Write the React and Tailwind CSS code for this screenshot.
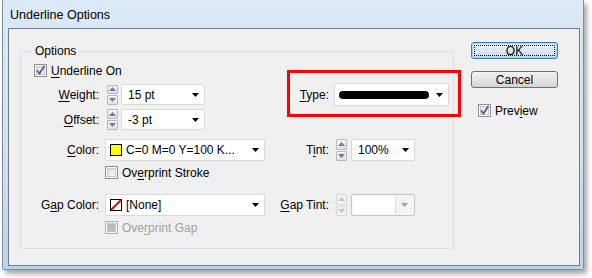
import React from "react";

const FONT = { fontFamily: '"Liberation Sans", Arial, sans-serif' };

function Acc({ text, at, className = "" }) {
  return (
    <span className={className}>
      {text.slice(0, at)}
      <span className="underline underline-offset-2">{text[at]}</span>
      {text.slice(at + 1)}
    </span>
  );
}

function Check({ checked, disabled }) {
  return (
    <div
      className={`w-[13px] h-[13px] border flex items-center justify-center ${
        disabled ? "border-[#b1b1b1] bg-[#f4f4f4]" : "border-[#8e8f8f] bg-white"
      }`}
    >
      <div
        className={`w-[9px] h-[9px] border flex items-center justify-center ${
          disabled
            ? "border-[#c9c9c9] bg-[#b8b8b8]"
            : "border-[#c8c8c8] bg-gradient-to-br from-[#dcdcdc] to-[#fbfbfb]"
        }`}
      >
        {checked && (
          <svg width="9" height="9" viewBox="0 0 9 9" className="overflow-visible">
            <path d="M1 4.5 L3.5 7.5 L8.5 0" stroke="#4a5f97" strokeWidth="1.8" fill="none" />
          </svg>
        )}
      </div>
    </div>
  );
}

function Spinner({ h, disabled }) {
  const col = disabled ? "#c4c4c4" : "#6b7db0";
  const cell = `flex-1 flex items-center justify-center border rounded-[1px] ${
    disabled ? "border-[#d6d6d6] bg-[#f2f2f2]" : "border-[#b8b8b8] bg-gradient-to-b from-[#f6f6f6] to-[#e2e2e2]"
  }`;
  return (
    <div className={`flex flex-col w-[11px] gap-[1px] ${h}`}>
      <div className={cell}>
        <svg width="7" height="4" viewBox="0 0 7 4">
          <path d="M3.5 0 L7 4 L0 4Z" fill={col} />
        </svg>
      </div>
      <div className={cell}>
        <svg width="7" height="4" viewBox="0 0 7 4">
          <path d="M0 0 L7 0 L3.5 4Z" fill={col} />
        </svg>
      </div>
    </div>
  );
}

function Arrow({ gray }) {
  return (
    <svg width="7" height="4" viewBox="0 0 7 4">
      <path d="M0 0 L7 0 L3.5 4Z" fill={gray ? "#a0a0a0" : "#000"} />
    </svg>
  );
}

function Drop({ w, h, children }) {
  return (
    <div
      className={`${w} ${h} bg-white border border-[#dadada] rounded-[2px] flex items-center pl-[6px] pr-[5px]`}
    >
      <div className="flex-1 flex items-center gap-[4px] min-w-0">{children}</div>
      <Arrow />
    </div>
  );
}

function OptionsGroup() {
  return (
    <div className="relative w-[434px] h-[198px] border border-[#d5dfe5] rounded-[3px] flex flex-col">
      <span className="absolute left-[12px] -top-[9px] px-[2px] bg-[#f0f0f0] leading-[16px]">Options</span>

      {/* underline on */}
      <div className="mt-[12px] pl-[13px] h-[13px] flex items-center gap-[4px]">
        <Check checked />
        <Acc text="Underline On" at={0} />
      </div>

      {/* weight + type */}
      <div className="mt-[6px] h-[23px] flex items-center">
        <div className="w-[257px] flex items-center">
          <div className="w-[78px] text-right">
            <Acc text="Weight:" at={0} />
          </div>
          <div className="ml-[8px]">
            <Spinner h="h-[20px]" />
          </div>
          <div className="ml-[3px]">
            <Drop w="w-[84px]" h="h-[21px]">15 pt</Drop>
          </div>
        </div>
        <div className="w-[51px] text-right">
          <Acc text="Type:" at={0} />
        </div>
        <div className="ml-[5px]">
          <Drop w="w-[115px]" h="h-[23px]">
            <div className="w-[90px] h-[8px] bg-black rounded-full -ml-[2px]" />
          </Drop>
        </div>
      </div>

      {/* offset */}
      <div className="mt-[3px] h-[21px] flex items-center">
        <div className="w-[78px] text-right">
          <Acc text="Offset:" at={0} />
        </div>
        <div className="ml-[8px]">
          <Spinner h="h-[21px]" />
        </div>
        <div className="ml-[3px]">
          <Drop w="w-[84px]" h="h-[21px]">-3 pt</Drop>
        </div>
      </div>

      {/* color + tint */}
      <div className="mt-[9px] h-[22px] flex items-center">
        <div className="w-[257px] flex items-center">
          <div className="w-[78px] text-right">
            <Acc text="Color:" at={0} />
          </div>
          <div className="ml-[6px]">
            <Drop w="w-[160px]" h="h-[22px]">
              <div className="w-[12px] h-[12px] border border-black bg-[#ffff00] -ml-[2px]" />
              <span className="whitespace-nowrap">C=0 M=0 Y=100 K...</span>
            </Drop>
          </div>
        </div>
        <div className="w-[51px] text-right">
          <Acc text="Tint:" at={1} />
        </div>
        <div className="ml-[7px]">
          <Spinner h="h-[22px]" />
        </div>
        <div className="ml-[4px]">
          <Drop w="w-[64px]" h="h-[22px]">100%</Drop>
        </div>
      </div>

      {/* overprint stroke */}
      <div className="mt-[5px] pl-[84px] h-[13px] flex items-center gap-[4px]">
        <Check />
        <Acc text="Overprint Stroke" at={2} />
      </div>

      {/* gap color + gap tint */}
      <div className="mt-[15px] h-[22px] flex items-center">
        <div className="w-[257px] flex items-center">
          <div className="w-[78px] text-right">
            <Acc text="Gap Color:" at={1} />
          </div>
          <div className="ml-[6px]">
            <Drop w="w-[160px]" h="h-[22px]">
              <div className="w-[12px] h-[12px] border border-black bg-white -ml-[2px] overflow-hidden">
                <svg width="10" height="10" viewBox="0 0 10 10">
                  <path d="M0 10 L10 0" stroke="#ff0000" strokeWidth="2" />
                </svg>
              </div>
              <span>[None]</span>
            </Drop>
          </div>
        </div>
        <div className="w-[51px] text-right whitespace-nowrap">
          <Acc text="Gap Tint:" at={0} />
        </div>
        <div className="ml-[7px]">
          <Spinner h="h-[22px]" disabled />
        </div>
        <div className="ml-[4px] w-[64px] h-[22px] border border-[#c4c4c4] bg-[#f4f4f4] rounded-[2px] flex items-center p-[1px]">
          <div className="w-[43px] h-full bg-white border-r border-[#dedede]" />
          <div className="flex-1 flex justify-center">
            <Arrow gray />
          </div>
        </div>
      </div>

      {/* overprint gap */}
      <div className="mt-[5px] pl-[84px] h-[13px] flex items-center gap-[4px]">
        <Check checked={false} disabled />
        <Acc text="Overprint Gap" at={3} className="text-[#a0a0a0]" />
      </div>

      {/* annotation highlight */}
      <div className="absolute left-[266px] top-[18px] w-[174px] h-[47px] border-[3px] border-[#ff0000] pointer-events-none" />
    </div>
  );
}

function Buttons() {
  return (
    <div className="ml-[17px] mt-[13px] flex flex-col">
      <div className="w-[87px] h-[17px] rounded-[3px] border border-[#3c7fb1] bg-gradient-to-b from-[#eef6fb] via-[#dbe9f2] to-[#c6dbe9] p-[2px] shadow-[inset_0_0_0_1px_#9fd8f2]">
        <div className="w-full h-full border border-dotted border-black flex items-center justify-center leading-none">
          OK
        </div>
      </div>
      <div className="mt-[12px] w-[87px] h-[17px] rounded-[3px] border border-[#707070] bg-gradient-to-b from-[#f2f2f2] via-[#e6e6e6] to-[#d2d2d2] flex items-center justify-center leading-none">
        Cancel
      </div>
      <div className="mt-[16px] ml-[7px] h-[13px] flex items-center gap-[4px]">
        <Check checked />
        <Acc text="Preview" at={4} />
      </div>
    </div>
  );
}

export default function App() {
  return (
    <div className="w-[592px] h-[278px] bg-white overflow-hidden text-[12px] text-black" style={FONT}>
      <div className="ml-[2px] w-[582px] h-[270px] flex flex-col border border-t-0 border-[#7e8c9c] rounded-b-[2px] bg-gradient-to-b from-[#dce9f6] via-[#d3e3f4] to-[#bcd3ec] shadow-[3px_4px_5px_rgba(0,0,0,0.35)]">
        <div className="h-[28px] shrink-0 flex items-center pl-[7px] pt-[3px] text-[12.5px]">Underline Options</div>
        <div className="flex-1 ml-[5px] mr-[3px] mb-[3px] border border-[#6f7c8c] bg-[#f0f0f0] flex items-start">
          <div className="ml-[11px] mt-[22px]">
            <OptionsGroup />
          </div>
          <Buttons />
        </div>
      </div>
    </div>
  );
}
